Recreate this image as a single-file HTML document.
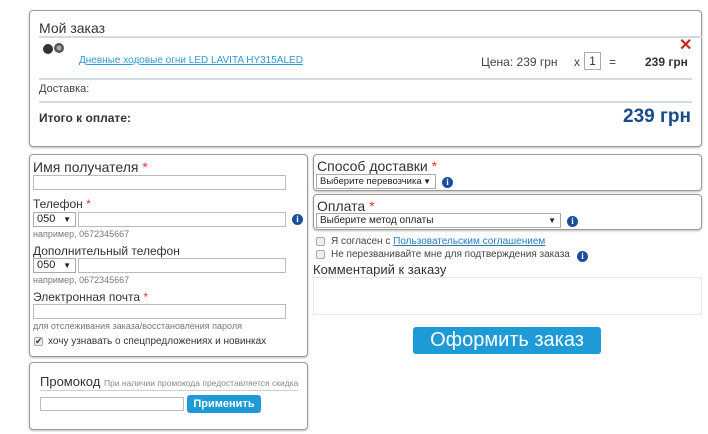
<!DOCTYPE html>
<html><head><meta charset="utf-8"><style>
*{box-sizing:border-box;margin:0;padding:0}
body{width:708px;height:434px;background:#fff;font-family:"Liberation Sans",Arial,sans-serif;color:#333;position:relative;overflow:hidden}
.a{position:absolute;white-space:nowrap}
.box{position:absolute;border:1px solid #999;border-radius:4px;box-shadow:0 1px 2px #bbb}
.line{position:absolute;height:2px;background:#d4dae3}
.inp{position:absolute;border:1px solid #bbb;background:#fff;height:15px}
.sel{position:absolute;border:1px solid #aaa;background:#fff;height:15px;font-size:11px;color:#222;padding-left:3px;line-height:13px}
.sel b{position:absolute;right:4px;top:0;font-size:8px}
.st{color:#e33}
.info{position:absolute;width:11px;height:11px;border-radius:50%;background:#1a4d9b;color:#fff;font:bold 9px/11px "Liberation Serif",serif;text-align:center}
.lbl{font-size:12px;color:#333}
.hint{font-size:9px;color:#777}
.cb{position:absolute;width:9px;height:9px;border:1px solid #aaa;background:#eee;border-radius:2px}
</style></head><body>
<div class="box" style="left:29px;top:10px;width:673px;height:137px"></div>
<div class="a" style="left:39px;top:20px;font-size:14px">Мой заказ</div>
<div class="line" style="left:39px;top:36px;width:663px"></div>
<div class="a" style="left:40px;top:41px;width:28px;height:14px">
<svg width="28" height="14"><circle cx="8" cy="8" r="5" fill="#333"/><circle cx="19" cy="7" r="5" fill="#555"/><circle cx="19" cy="7" r="2.5" fill="#aab"/></svg></div>
<div class="a" style="left:79px;top:55px;font-size:10px;color:#2a9ad6;text-decoration:underline">Дневные ходовые огни LED LAVITA HY315ALED</div>
<div class="a" style="left:679px;top:35px;font-size:16px;font-weight:bold;color:#c22">✕</div>
<div class="a" style="left:481px;top:55px;font-size:12px;color:#444">Цена: 239 грн</div>
<div class="a" style="left:574px;top:55px;font-size:12px;color:#444">x</div>
<div class="a" style="left:584px;top:52px;width:17px;height:18px;border:1px solid #aaa;font-size:12px;text-align:center;line-height:16px">1</div>
<div class="a" style="left:609px;top:55px;font-size:12px;color:#444">=</div>
<div class="a" style="left:645px;top:55px;font-size:12px;font-weight:bold;color:#333">239 грн</div>
<div class="line" style="left:39px;top:78px;width:653px"></div>
<div class="a" style="left:39px;top:83px;font-size:11px;color:#444">Доставка:</div>
<div class="line" style="left:39px;top:101px;width:653px"></div>
<div class="a" style="left:39px;top:111px;font-size:12px;font-weight:bold">Итого к оплате:</div>
<div class="a" style="left:623px;top:106px;font-size:19px;font-weight:bold;color:#1a4a8a">239 грн</div>

<div class="box" style="left:29px;top:154px;width:279px;height:203px"></div>
<div class="a" style="left:33px;top:159px;font-size:14px">Имя получателя <span class="st">*</span></div>
<div class="inp" style="left:33px;top:175px;width:253px"></div>
<div class="a lbl" style="left:33px;top:197px">Телефон <span class="st">*</span></div>
<div class="sel" style="left:33px;top:212px;width:43px">050<b>▼</b></div>
<div class="inp" style="left:78px;top:212px;width:208px"></div>
<div class="info" style="left:292px;top:214px">i</div>
<div class="a hint" style="left:33px;top:229px">например, 0672345667</div>
<div class="a lbl" style="left:33px;top:244px">Дополнительный телефон</div>
<div class="sel" style="left:33px;top:258px;width:43px">050<b>▼</b></div>
<div class="inp" style="left:78px;top:258px;width:208px"></div>
<div class="a hint" style="left:33px;top:275px">например, 0672345667</div>
<div class="a lbl" style="left:33px;top:290px">Электронная почта <span class="st">*</span></div>
<div class="inp" style="left:33px;top:304px;width:253px"></div>
<div class="a hint" style="left:33px;top:321px">для отслеживания заказа/восстановления пароля</div>
<div class="cb" style="left:34px;top:337px;font-size:9px;line-height:7px">✔</div>
<div class="a" style="left:48px;top:336px;font-size:10px">хочу узнавать о спецпредложениях и новинках</div>

<div class="box" style="left:29px;top:362px;width:279px;height:68px"></div>
<div class="a" style="left:40px;top:374px;font-size:13px;color:#333">Промокод <span style="font-size:8.5px;color:#888">При наличии промокода предоставляется скидка</span></div>
<div class="line" style="left:40px;top:390px;width:258px;height:1px;background:#c8d0dc"></div>
<div class="inp" style="left:40px;top:397px;width:144px;height:14px"></div>
<div class="a" style="left:187px;top:395px;width:74px;height:18px;background:#1e9ad6;border-radius:3px;color:#fff;font-size:11px;font-weight:bold;text-align:center;line-height:18px">Применить</div>

<div class="box" style="left:313px;top:154px;width:389px;height:37px"></div>
<div class="a" style="left:317px;top:158px;font-size:14px">Способ доставки <span class="st">*</span></div>
<div class="sel" style="left:316px;top:174px;width:120px;font-size:9.5px">Выберите перевозчика<b>▼</b></div>
<div class="info" style="left:442px;top:177px">i</div>
<div class="box" style="left:313px;top:194px;width:389px;height:36px"></div>
<div class="a" style="left:317px;top:198px;font-size:14px">Оплата <span class="st">*</span></div>
<div class="sel" style="left:316px;top:213px;width:245px;font-size:10px">Выберите метод оплаты<b>▼</b></div>
<div class="info" style="left:567px;top:216px">i</div>
<div class="cb" style="left:316px;top:237px"></div>
<div class="a" style="left:331px;top:236px;font-size:10px;color:#444">Я согласен с <span style="color:#2a7ab6;text-decoration:underline">Пользовательским соглашением</span></div>
<div class="cb" style="left:316px;top:250px"></div>
<div class="a" style="left:331px;top:249px;font-size:10px;color:#444">Не перезванивайте мне для подтверждения заказа</div>
<div class="info" style="left:577px;top:251px">i</div>
<div class="a" style="left:313px;top:262px;font-size:13px">Комментарий к заказу</div>
<div class="a" style="left:313px;top:277px;width:389px;height:38px;border:1px solid #e4e8ee"></div>
<div class="a" style="left:413px;top:327px;width:188px;height:27px;background:#1e9ad6;border-radius:3px;color:#fff;font-size:20px;text-align:center;line-height:27px">Оформить заказ</div>
</body></html>
